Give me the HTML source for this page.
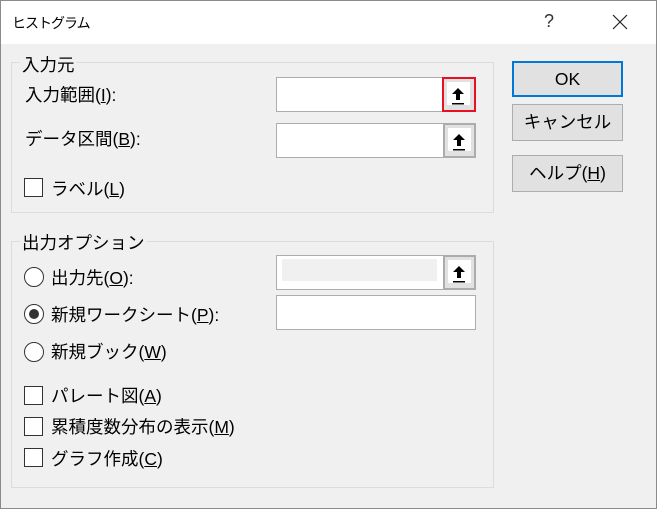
<!DOCTYPE html><html><head><style>
body{margin:0;width:657px;height:509px;overflow:hidden;font-family:"Liberation Sans","Noto Sans CJK JP",sans-serif;font-size:17.5px;color:#000;}
.win{position:absolute;left:0;top:0;width:657px;height:509px;background:#f0f0f0;}
.frame{position:absolute;left:0;top:0;width:657px;height:509px;box-sizing:border-box;border:1px solid #8a8a8a;pointer-events:none;}
.title{position:absolute;left:0;top:0;width:657px;height:44px;background:#fff;}
.a{position:absolute;white-space:nowrap;line-height:20px;}
.grp{position:absolute;border:1px solid #dcdcdc;}
.leg{position:absolute;background:#f0f0f0;padding:0 2px;}
.inp{position:absolute;background:#fff;border:1px solid #adadad;box-sizing:border-box;}
.btn{position:absolute;background:#e1e1e1;border:1px solid #adadad;box-sizing:border-box;text-align:center;}
.rb{position:absolute;box-sizing:border-box;border:2px solid #acacac;background:#e1e1e1;}
.rb .w{position:absolute;left:3px;top:3px;width:23px;height:23px;background:#fff;}
.cb{position:absolute;width:19px;height:19px;box-sizing:border-box;border:1px solid #333;background:#fff;}
.rd{position:absolute;width:20px;height:20px;box-sizing:border-box;border:1px solid #333;border-radius:50%;background:#fff;}
u{text-decoration:underline;}
</style></head><body>
<div class="win">
<div class="title"></div>
<div class="a" style="left:12px;top:13px;font-size:14px;letter-spacing:-1px">ヒストグラム</div>
<div class="a" style="left:544px;top:11px;font-size:18px;color:#333">?</div>
<svg class="a" style="left:612px;top:14px" width="16" height="16"><path d="M1 1L15 15M15 1L1 15" stroke="#222" stroke-width="1.2"/></svg>

<div class="grp" style="left:11px;top:62px;width:481px;height:149px"></div>
<div class="leg a" style="left:20px;top:55px">入力元</div>
<div class="a" style="left:25px;top:85px">入力範囲(<u>I</u>):</div>
<div class="inp" style="left:276px;top:77px;width:168px;height:35px"></div>
<div class="rb" style="left:442px;top:77px;width:34px;height:35px;border-color:#e81123"><div class="w"></div><svg class="a" style="left:6px;top:7px" width="18" height="20"><path d="M8 2L2 8H6V14H10V8H14Z" fill="#000"/><rect x="2" y="17" width="12" height="1.5" fill="#000"/></svg></div>
<div class="a" style="left:25px;top:129px">データ区間(<u>B</u>):</div>
<div class="inp" style="left:276px;top:123px;width:168px;height:35px"></div>
<div class="rb" style="left:443px;top:123px;width:33px;height:35px"><div class="w"></div><svg class="a" style="left:6px;top:7px" width="18" height="20"><path d="M8 2L2 8H6V14H10V8H14Z" fill="#000"/><rect x="2" y="17" width="12" height="1.5" fill="#000"/></svg></div>
<div class="cb" style="left:24px;top:178px"></div>
<div class="a" style="left:51px;top:179px">ラベル(<u>L</u>)</div>

<div class="btn" style="left:512px;top:61px;width:111px;height:36px;border:2px solid #0078d7;line-height:32px">OK</div>
<div class="btn" style="left:512px;top:104px;width:111px;height:37px;line-height:35px">キャンセル</div>
<div class="btn" style="left:512px;top:155px;width:111px;height:37px;line-height:35px">ヘルプ(<u>H</u>)</div>

<div class="grp" style="left:11px;top:241px;width:481px;height:245px"></div>
<div class="leg a" style="left:20px;top:233px">出力オプション</div>
<div class="rd" style="left:24px;top:267px"></div>
<div class="a" style="left:51px;top:268px">出力先(<u>O</u>):</div>
<div class="inp" style="left:276px;top:255px;width:168px;height:35px"><div class="a" style="left:5px;top:3px;width:155px;height:22px;background:#f0f0f0"></div></div>
<div class="rb" style="left:443px;top:255px;width:33px;height:35px"><div class="w"></div><svg class="a" style="left:6px;top:7px" width="18" height="20"><path d="M8 2L2 8H6V14H10V8H14Z" fill="#000"/><rect x="2" y="17" width="12" height="1.5" fill="#000"/></svg></div>
<div class="rd" style="left:24px;top:304px"><div class="a" style="left:4px;top:4px;width:10px;height:10px;border-radius:50%;background:#333"></div></div>
<div class="a" style="left:51px;top:305px">新規ワークシート(<u>P</u>):</div>
<div class="inp" style="left:276px;top:295px;width:200px;height:35px"></div>
<div class="rd" style="left:24px;top:342px"></div>
<div class="a" style="left:51px;top:342px">新規ブック(<u>W</u>)</div>
<div class="cb" style="left:24px;top:386px"></div>
<div class="a" style="left:51px;top:386px">パレート図(<u>A</u>)</div>
<div class="cb" style="left:24px;top:417px"></div>
<div class="a" style="left:51px;top:417px">累積度数分布の表示(<u>M</u>)</div>
<div class="cb" style="left:24px;top:448px"></div>
<div class="a" style="left:51px;top:449px">グラフ作成(<u>C</u>)</div>
</div>
<div class="frame"></div>
</body></html>
